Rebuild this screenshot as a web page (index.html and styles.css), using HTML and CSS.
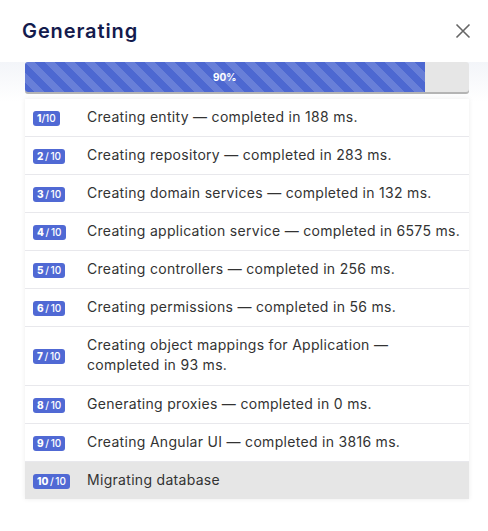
FILE: index.html
```html
<!DOCTYPE html>
<html lang="en">
<head>
    <meta charset="UTF-8">
    <meta name="viewport" content="width=device-width, initial-scale=1.0">
    <title>Generating</title>
    <link rel="stylesheet" href="styles.css">
</head>
<body>
    <div class="modal">
        <div class="modal-header">
            <h2 class="modal-title">Generating</h2>
            <span class="close-btn">
                <svg width="16" height="16" viewBox="0 0 16 16">
                    <path d="M1.5 1.5 L14.5 14.5 M14.5 1.5 L1.5 14.5" stroke="#666" stroke-width="1.6" fill="none"/>
                </svg>
            </span>
        </div>
        <div class="modal-body">
            <div class="progress">
                <div class="progress-bar" style="width: 90%;">90%</div>
            </div>
            <ul class="step-list">
                <li class="step"><span class="step-num"><span class="badge"><b>1</b>/10</span></span><span class="step-text">Creating entity — completed in 188 ms.</span></li>
                <li class="step"><span class="step-num"><span class="badge"><b>2</b> / 10</span></span><span class="step-text">Creating repository — completed in 283 ms.</span></li>
                <li class="step"><span class="step-num"><span class="badge"><b>3</b> / 10</span></span><span class="step-text">Creating domain services — completed in 132 ms.</span></li>
                <li class="step"><span class="step-num"><span class="badge"><b>4</b> / 10</span></span><span class="step-text">Creating application service — completed in 6575 ms.</span></li>
                <li class="step"><span class="step-num"><span class="badge"><b>5</b> / 10</span></span><span class="step-text">Creating controllers — completed in 256 ms.</span></li>
                <li class="step"><span class="step-num"><span class="badge"><b>6</b> / 10</span></span><span class="step-text">Creating permissions — completed in 56 ms.</span></li>
                <li class="step two-line"><span class="step-num"><span class="badge"><b>7</b> / 10</span></span><span class="step-text">Creating object mappings for Application —<br>completed in 93 ms.</span></li>
                <li class="step"><span class="step-num"><span class="badge"><b>8</b> / 10</span></span><span class="step-text">Generating proxies — completed in 0 ms.</span></li>
                <li class="step"><span class="step-num"><span class="badge"><b>9</b> / 10</span></span><span class="step-text">Creating Angular UI — completed in 3816 ms.</span></li>
                <li class="step active"><span class="step-num"><span class="badge"><b>10</b> / 10</span></span><span class="step-text">Migrating database</span></li>
            </ul>
        </div>
    </div>
</body>
</html>
```

FILE: styles.css
```css
body {
    margin: 0;
    background-color: #fff;
    font-family: Inter, "Open Sans", sans-serif;
    color: #333;
}
.modal {
    width: 488px;
    height: 531px;
    background-color: #fff;
}
.modal-header {
    display: flex;
    justify-content: space-between;
    align-items: center;
    height: 62px;
    padding: 0 17px 0 22px;
    box-sizing: border-box;
}
.modal-title {
    margin: 0;
    font-size: 20px;
    font-weight: 600;
    color: #141b4d;
    letter-spacing: 0.9px;
}
.close-btn {
    display: flex;
    cursor: pointer;
}
.modal-body {
    padding: 0 19px 0 25px;
    background: linear-gradient(#f3f5f9, #fff 40px);
}
.progress {
    height: 30px;
    background-color: #e6e6e6;
    border-radius: 3px;
    box-shadow: 0 2px 0 #b4b4b4;
    overflow: hidden;
}
.progress-bar {
    height: 100%;
    background-color: #4d68d1;
    background-image: linear-gradient(45deg, rgba(255, 255, 255, 0.15) 25%, transparent 25%, transparent 50%, rgba(255, 255, 255, 0.15) 50%, rgba(255, 255, 255, 0.15) 75%, transparent 75%, transparent);
    background-size: 20px 20px;
    color: #fff;
    font-size: 10px;
    font-weight: 700;
    display: flex;
    align-items: center;
    justify-content: center;
}
.step-list {
    list-style: none;
    margin: 7px 0 0;
    padding: 0;
    background-color: #fff;
    box-shadow: 0 0 5px rgba(0, 0, 0, 0.08);
}
.step {
    display: flex;
    align-items: center;
    padding: 8px 2px 9px 8px;
    border-bottom: 1px solid #e8e8ec;
    font-size: 14px;
    line-height: 20px;
}
.step.two-line {
    padding-bottom: 10px;
}
.step:last-child {
    border-bottom: none;
}
.step.active {
    background-color: #e6e6e6;
}
.step-num {
    flex: none;
    width: 54px;
}
.badge {
    display: inline-block;
    padding: 0 4px;
    height: 15px;
    line-height: 15px;
    border-radius: 3px;
    background-color: #5069d4;
    color: #fff;
    font-size: 10px;
    font-weight: 500;
    word-spacing: -1px;
}
.badge b {
    font-weight: 800;
}
.step-text {
    color: #333;
    letter-spacing: 0.3px;
}
```
